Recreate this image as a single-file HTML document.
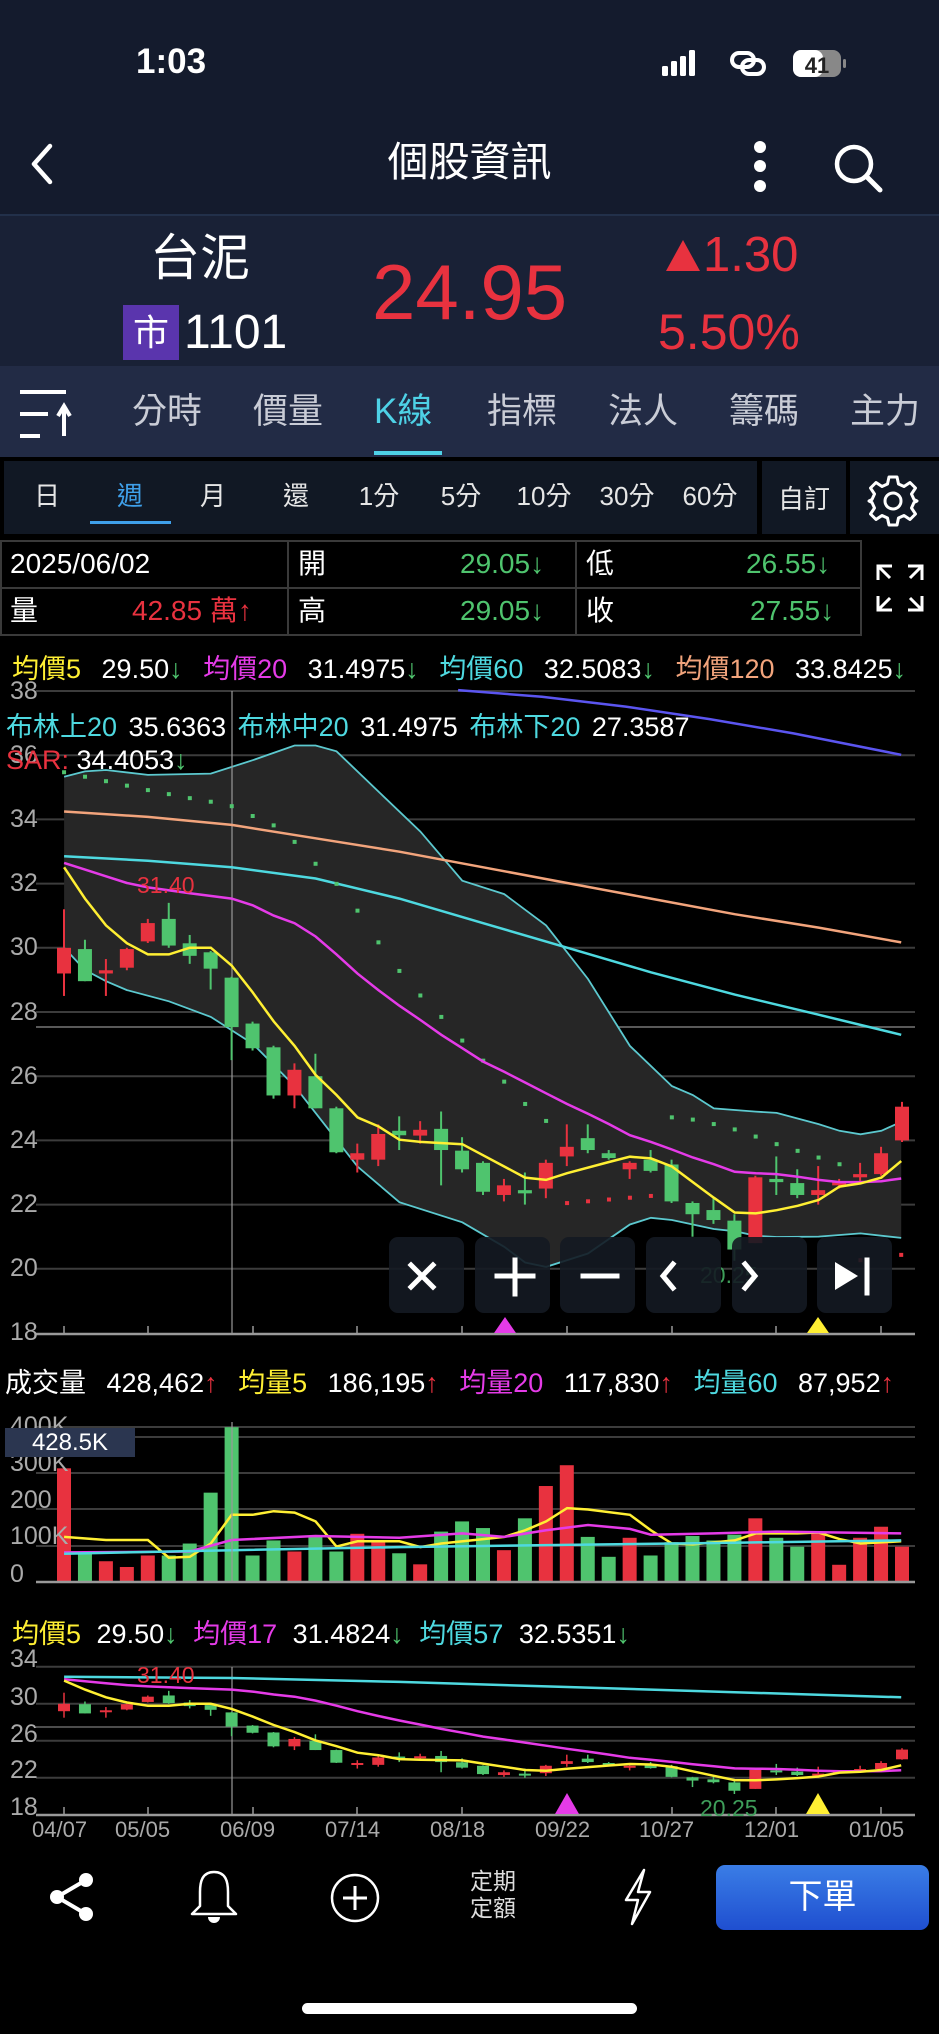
<!DOCTYPE html>
<html><head><meta charset="utf-8">
<style>
*{margin:0;padding:0;box-sizing:border-box}
body{width:939px;height:2034px;background:#000;position:relative;overflow:hidden;font-family:"Liberation Sans","Noto Sans CJK TC",sans-serif;color:#fff}
.a{position:absolute;white-space:nowrap}
.yl{position:absolute;left:10px;font-size:25px;color:#aaa;line-height:26px}
.tab{position:absolute;top:388px;font-size:35px;color:#c9ccd6;line-height:48px}
.pd{position:absolute;top:479px;font-size:26px;color:#e6e6e6;line-height:34px;transform:translateX(-50%)}
.btn{position:absolute;top:1237px;width:75px;height:76px;background:rgba(20,26,34,.9);border-radius:9px}
.cell{position:absolute;font-size:28px;line-height:32px}
.lg{font-size:27px;line-height:30px}
</style></head><body>
<!-- header -->
<div class="a" style="left:0;top:0;width:939px;height:214px;background:#141b2d"></div>
<div class="a" style="left:136px;top:42px;font-size:35px;font-weight:bold">1:03</div>
<svg class="a" style="left:660px;top:48px" width="200" height="34" viewBox="0 0 200 34">
<rect x="2" y="18" width="6" height="10" rx="1.5" fill="#fff"/><rect x="11" y="13" width="6" height="15" rx="1.5" fill="#fff"/><rect x="20" y="8" width="6" height="20" rx="1.5" fill="#fff"/><rect x="29" y="2" width="6" height="26" rx="1.5" fill="#fff"/>
<g fill="none" stroke="#fff" stroke-width="4"><rect x="72" y="5" width="22" height="14" rx="7"/><rect x="82" y="12" width="22" height="14" rx="7"/></g>
<rect x="133" y="2" width="48" height="27" rx="8" fill="#888"/><rect x="133" y="2" width="30" height="27" rx="8" fill="#fff"/><rect x="183" y="11" width="3" height="9" rx="1.5" fill="#888"/>
<text x="157" y="25" font-size="22" font-weight="bold" text-anchor="middle" fill="#222" font-family="Liberation Sans">41</text>
</svg>
<svg class="a" style="left:26px;top:142px" width="30" height="44"><path d="M24 4 L8 22 L24 40" fill="none" stroke="#fff" stroke-width="4.5" stroke-linecap="round" stroke-linejoin="round"/></svg>
<div class="a" style="left:0;width:939px;top:136px;text-align:center;font-size:41px;line-height:52px">個股資訊</div>
<svg class="a" style="left:748px;top:140px" width="24" height="56"><circle cx="12" cy="7" r="6" fill="#fff"/><circle cx="12" cy="26" r="6" fill="#fff"/><circle cx="12" cy="46" r="6" fill="#fff"/></svg>
<svg class="a" style="left:830px;top:140px" width="56" height="56"><circle cx="24" cy="24" r="17" fill="none" stroke="#fff" stroke-width="4.5"/><path d="M37 37 L50 50" stroke="#fff" stroke-width="5" stroke-linecap="round"/></svg>
<!-- stock info -->
<div class="a" style="left:0;top:214px;width:939px;height:152px;background:#192136;border-top:2px solid #22304a"></div>
<div class="a" style="left:150px;top:228px;font-size:50px;line-height:60px">台泥</div>
<div class="a" style="left:123px;top:305px;width:56px;height:55px;background:#5a35ad;font-size:36px;line-height:55px;text-align:center">市</div>
<div class="a" style="left:184px;top:303px;font-size:48px;line-height:60px">1101</div>
<div class="a" style="left:372px;top:250px;font-size:78px;line-height:84px;color:#e8323f">24.95</div>
<svg class="a" style="left:665px;top:238px" width="36" height="34"><path d="M18 2 L35 33 L1 33Z" fill="#e8323f"/></svg>
<div class="a" style="left:703px;top:226px;font-size:49px;line-height:58px;color:#e8323f">1.30</div>
<div class="a" style="left:658px;top:302px;font-size:50px;line-height:60px;color:#e8323f">5.50%</div>
<!-- tabs -->
<div class="a" style="left:0;top:366px;width:939px;height:91px;background:#222b45"></div>
<svg class="a" style="left:18px;top:388px" width="56" height="52"><path d="M2 4 H48 M2 26 H30 M2 48 H22" stroke="#fff" stroke-width="4"/><path d="M46 48 V20 M40 28 L46 18 L52 28" stroke="#fff" stroke-width="4" fill="none"/></svg>
<div class="tab" style="left:132px">分時</div>
<div class="tab" style="left:253px">價量</div>
<div class="tab" style="left:374px;color:#4ed1e6">K線</div>
<div class="tab" style="left:487px">指標</div>
<div class="tab" style="left:608px">法人</div>
<div class="tab" style="left:729px">籌碼</div>
<div class="tab" style="left:850px">主力</div>
<div class="a" style="left:374px;top:451px;width:68px;height:4px;background:#4ed1e6"></div>
<!-- period bar -->
<div class="a" style="left:0;top:457px;width:939px;height:80px;background:#000"></div>
<div class="a" style="left:4px;top:461px;width:753px;height:73px;background:#111824"></div>
<div class="a" style="left:762px;top:461px;width:84px;height:73px;background:#111824"></div>
<div class="a" style="left:850px;top:461px;width:89px;height:73px;background:#111824"></div>
<div class="pd" style="left:47px">日</div>
<div class="pd" style="left:130px;color:#3fa0ea">週</div>
<div class="pd" style="left:213px">月</div>
<div class="pd" style="left:296px">還</div>
<div class="pd" style="left:379px">1分</div>
<div class="pd" style="left:461px">5分</div>
<div class="pd" style="left:544px">10分</div>
<div class="pd" style="left:627px">30分</div>
<div class="pd" style="left:710px">60分</div>
<div class="pd" style="left:804px;top:482px">自訂</div>
<div class="a" style="left:90px;top:521px;width:81px;height:3px;background:#3fa0ea"></div>
<svg class="a" style="left:866px;top:474px" width="54" height="54" viewBox="0 0 54 54"><path d="M23 3 H31 L32.5 10 L38 12.5 L44 8.5 L49.5 14 L45.5 20 L48 25.5 L51 27 L48 28.5 L45.5 34 L49.5 40 L44 45.5 L38 41.5 L32.5 44 L31 51 H23 L21.5 44 L16 41.5 L10 45.5 L4.5 40 L8.5 34 L6 28.5 L3 27 L6 25.5 L8.5 20 L4.5 14 L10 8.5 L16 12.5 L21.5 10 Z" fill="none" stroke="#fff" stroke-width="3" stroke-linejoin="round"/><circle cx="27" cy="27" r="8" fill="none" stroke="#fff" stroke-width="3"/></svg>
<!-- info table -->
<div class="a" style="left:0;top:540px;width:862px;height:96px;border:2px solid #3a3a3a;background:#000"></div>
<div class="a" style="left:0;top:587px;width:862px;height:2px;background:#3a3a3a"></div>
<div class="a" style="left:287px;top:540px;width:2px;height:96px;background:#3a3a3a"></div>
<div class="a" style="left:575px;top:540px;width:2px;height:96px;background:#3a3a3a"></div>
<div class="cell a" style="left:10px;top:548px">2025/06/02</div>
<div class="cell a" style="left:10px;top:595px">量</div>
<div class="cell a" style="left:132px;top:595px;color:#e8323f">42.85 萬↑</div>
<div class="cell a" style="left:298px;top:548px">開</div>
<div class="cell a" style="left:460px;top:548px;color:#4fc46e">29.05↓</div>
<div class="cell a" style="left:298px;top:595px">高</div>
<div class="cell a" style="left:460px;top:595px;color:#4fc46e">29.05↓</div>
<div class="cell a" style="left:586px;top:548px">低</div>
<div class="cell a" style="left:746px;top:548px;color:#4fc46e">26.55↓</div>
<div class="cell a" style="left:586px;top:595px">收</div>
<div class="cell a" style="left:750px;top:595px;color:#4fc46e">27.55↓</div>
<svg class="a" style="left:874px;top:562px" width="52" height="52"><g stroke="#fff" stroke-width="3" fill="none"><path d="M4 18 V4 H18 M4 4 L16 16"/><path d="M48 18 V4 H34 M48 4 L36 16"/><path d="M4 34 V48 H18 M4 48 L16 36"/><path d="M48 34 V48 H34 M48 48 L36 36"/></g></svg>
<!-- chart svg -->
<svg id="c" class="a" style="left:0;top:0" width="939" height="2034"></svg>
<!-- MA legend -->
<div class="a lg" style="left:12px;top:654px;word-spacing:13px"><span style="color:#ffef33">均價5</span> 29.50<span style="color:#4fc46e">↓</span> <span style="color:#e53be8">均價20</span> 31.4975<span style="color:#4fc46e">↓</span> <span style="color:#4ed9e0">均價60</span> 32.5083<span style="color:#4fc46e">↓</span> <span style="color:#f2a47c">均價120</span> 33.8425<span style="color:#4fc46e">↓</span></div>
<div class="yl" style="top:678px">38</div><div class="yl" style="top:742px">36</div><div class="yl" style="top:806px">34</div><div class="yl" style="top:870px">32</div><div class="yl" style="top:934px">30</div><div class="yl" style="top:999px">28</div><div class="yl" style="top:1063px">26</div><div class="yl" style="top:1127px">24</div><div class="yl" style="top:1191px">22</div><div class="yl" style="top:1255px">20</div><div class="yl" style="top:1319px">18</div>
<div class="a lg" style="left:6px;top:712px;color:#4ed9e0;word-spacing:4px">布林上20 <span style="color:#fff">35.6363</span> 布林中20 <span style="color:#fff">31.4975</span> 布林下20 <span style="color:#fff">27.3587</span></div>
<div class="a lg" style="left:6px;top:745px;color:#e8323f">SAR: <span style="color:#fff">34.4053</span><span style="color:#4fc46e">↓</span></div>
<div class="a" style="left:137px;top:872px;font-size:23px;color:#e8323f">31.40</div>
<div class="a" style="left:700px;top:1262px;font-size:23px;color:#3e9e5a">20.25</div>
<!-- buttons -->
<div class="btn" style="left:389px"></div><div class="btn" style="left:475px"></div><div class="btn" style="left:560px"></div><div class="btn" style="left:646px"></div><div class="btn" style="left:732px"></div><div class="btn" style="left:817px"></div>
<svg class="a" style="left:380px;top:1237px" width="520" height="76">
<g stroke="#fff" stroke-width="5" fill="none" stroke-linecap="square">
<path d="M31 28 L53 50 M53 28 L31 50"/><path d="M135 23 V57 M117 39 H153"/><path d="M203 39 H237"/>
<path d="M293 27 L283 39 L293 51"/><path d="M365 27 L375 39 L365 51"/>
<path d="M487 23 V56"/></g><path d="M455 25 L478 39 L455 53Z" fill="#fff"/>
</svg>
<!-- volume -->
<div class="a lg" style="left:5px;top:1368px;word-spacing:13px">成交量 428,462<span style="color:#e8323f">↑</span> <span style="color:#ffef33">均量5</span> 186,195<span style="color:#e8323f">↑</span> <span style="color:#e53be8">均量20</span> 117,830<span style="color:#e8323f">↑</span> <span style="color:#4ed9e0">均量60</span> 87,952<span style="color:#e8323f">↑</span></div>
<div class="yl" style="top:1413px">400K</div><div class="yl" style="top:1450px">300K</div><div class="yl" style="top:1487px">200</div><div class="yl" style="top:1523px">100K</div><div class="yl" style="top:1561px">0</div>
<div class="a" style="left:5px;top:1428px;width:130px;height:29px;background:#2b3650;font-size:24px;line-height:29px;text-align:center">428.5K</div>
<!-- lower -->
<div class="a lg" style="left:12px;top:1619px;word-spacing:8px"><span style="color:#ffef33">均價5</span> 29.50<span style="color:#4fc46e">↓</span> <span style="color:#e53be8">均價17</span> 31.4824<span style="color:#4fc46e">↓</span> <span style="color:#4ed9e0">均價57</span> 32.5351<span style="color:#4fc46e">↓</span></div>
<div class="yl" style="top:1646px">34</div><div class="yl" style="top:1684px">30</div><div class="yl" style="top:1721px">26</div><div class="yl" style="top:1757px">22</div><div class="yl" style="top:1794px">18</div>
<div class="a" style="left:137px;top:1662px;font-size:23px;color:#e8323f">31.40</div>
<div class="a" style="left:700px;top:1795px;font-size:23px;color:#3e9e5a">20.25</div>
<div class="a" style="left:0;top:1817px;width:939px;font-size:22px;color:#aaa;height:26px">
<span class="a" style="left:32px">04/07</span><span class="a" style="left:115px">05/05</span><span class="a" style="left:220px">06/09</span><span class="a" style="left:325px">07/14</span><span class="a" style="left:430px">08/18</span><span class="a" style="left:535px">09/22</span><span class="a" style="left:639px">10/27</span><span class="a" style="left:744px">12/01</span><span class="a" style="left:849px">01/05</span></div>
<!-- bottom bar -->
<svg class="a" style="left:48px;top:1872px" width="48" height="50"><g fill="#fff"><circle cx="38" cy="8" r="7"/><circle cx="9" cy="25" r="7"/><circle cx="38" cy="42" r="7"/></g><path d="M38 8 L9 25 L38 42" stroke="#fff" stroke-width="4" fill="none"/></svg>
<svg class="a" style="left:187px;top:1868px" width="54" height="58"><path d="M27 4 C15 4 13 14 13 24 V38 L5 46 H49 L41 38 V24 C41 14 39 4 27 4Z" fill="none" stroke="#fff" stroke-width="2.5" stroke-linejoin="round"/><path d="M21 49 A6 6 0 0 0 33 49Z" fill="#fff"/></svg>
<svg class="a" style="left:329px;top:1872px" width="52" height="52"><circle cx="26" cy="26" r="23" fill="none" stroke="#fff" stroke-width="2.5"/><path d="M26 14 V38 M14 26 H38" stroke="#fff" stroke-width="3"/></svg>
<div class="a" style="left:470px;top:1868px;font-size:23px;line-height:27px;color:#ddd">定期<br>定額</div>
<svg class="a" style="left:620px;top:1868px" width="36" height="58"><path d="M24 2 L6 32 H18 L12 56 L30 24 H18 Z" fill="none" stroke="#fff" stroke-width="2.5" stroke-linejoin="round"/></svg>
<div class="a" style="left:716px;top:1865px;width:213px;height:65px;border-radius:9px;background:linear-gradient(#3a7de6,#1f4fd0);font-size:34px;line-height:65px;text-align:center">下單</div>
<div class="a" style="left:302px;top:2003px;width:335px;height:11px;border-radius:6px;background:#fff"></div>
<script>
var S=document.getElementById('c'),h='';
function X(i){return 64+20.95*i}
function UY(p){return 691+(38-p)*32.1}
function LY(p){return 1814.8-(p-18)*9.25}
function zp(zy){return 38-(zy-115)/71.9}
function poly(pts,fn,col,w){var s=pts.map(function(q){return (q[0]/1.67).toFixed(1)+','+fn(zp(q[1])).toFixed(1)}).join(' ');h+='<polyline points="'+s+'" fill="none" stroke="'+col+'" stroke-width="'+w+'"/>';}
[38,36,34,32,30,28,26,24,22,20].forEach(function(p){h+='<line x1="36" x2="915" y1="'+UY(p)+'" y2="'+UY(p)+'" stroke="#3c3c3c" stroke-width="2"/>'});
h+='<line x1="36" x2="915" y1="1027" y2="1027" stroke="#777" stroke-width="1.5"/>';
var up=[[107,307],[142,295],[177,292],[247,303],[352,300],[422,270],[492,237],[527,237],[562,250],[632,340],[702,430],[772,540],[842,570],[912,640],[982,760],[1052,910],[1122,1000],[1157,1020],[1192,1050],[1262,1057],[1297,1060],[1367,1085],[1402,1100],[1437,1108],[1472,1100],[1505,1080]];
var lo=[[107,690],[142,740],[177,765],[212,785],[282,810],[352,845],[422,905],[492,1000],[562,1120],[597,1180],[632,1220],[667,1260],[772,1305],[842,1360],[877,1395],[912,1405],[982,1375],[1052,1310],[1087,1295],[1122,1300],[1192,1320],[1227,1325],[1262,1335],[1297,1338],[1367,1337],[1437,1330],[1505,1340]];
var fill=up.concat(lo.slice().reverse()).map(function(q){return (q[0]/1.67).toFixed(1)+','+UY(zp(q[1])).toFixed(1)}).join(' ');
h+='<polygon points="'+fill+'" fill="#262626"/>';
poly(up,UY,'#5cc9cf',1.8);poly(lo,UY,'#5cc9cf',1.8);
h+='<line x1="232" x2="232" y1="691" y2="1333" stroke="#999" stroke-width="1.2"/>';
var ma5=[[107,510],[142,580],[177,640],[212,680],[247,705],[282,705],[317,690],[352,690],[387,730],[422,790],[457,855],[492,910],[527,975],[562,1020],[597,1070],[632,1090],[667,1120],[702,1125],[772,1130],[807,1155],[842,1180],[877,1205],[912,1210],[947,1195],[1017,1170],[1052,1158],[1087,1162],[1122,1180],[1157,1215],[1192,1250],[1227,1283],[1262,1285],[1297,1278],[1332,1268],[1367,1255],[1402,1225],[1437,1218],[1472,1205],[1505,1168]];
var ma20=[[107,500],[142,515],[177,530],[212,545],[247,555],[317,568],[387,580],[422,595],[457,618],[492,635],[527,665],[562,705],[597,748],[632,785],[667,820],[702,852],[737,885],[772,915],[807,945],[842,968],[877,992],[912,1016],[947,1040],[982,1062],[1017,1085],[1052,1110],[1087,1125],[1122,1142],[1157,1160],[1192,1175],[1227,1192],[1262,1195],[1297,1197],[1332,1203],[1367,1210],[1402,1215],[1437,1215],[1472,1213],[1505,1207]];
var ma60=[[107,485],[247,495],[387,510],[527,535],[667,580],[807,635],[947,690],[1087,745],[1227,795],[1367,840],[1505,885]];
var ma120=[[107,385],[247,397],[387,415],[527,445],[667,475],[807,510],[947,545],[1087,580],[1227,615],[1367,645],[1505,678]];
var blue=[[765,113],[905,128],[1045,150],[1185,178],[1325,210],[1505,258]];
poly(ma120,UY,'#f2a47c',2.5);poly(ma60,UY,'#4ed9e0',2.5);poly(blue,UY,'#5b55f0',2.5);
var sg=[[107,297],[142,307],[177,317],[212,327],[247,337],[282,346],[317,355],[352,363],[387,373],[422,395],[457,416],[492,453],[527,502],[562,547],[597,607],[632,678],[667,742],[702,797],[737,845],[772,898],[807,943],[842,990],[877,1040],[912,1078],[1122,1070],[1157,1075],[1192,1085],[1227,1097],[1262,1113],[1297,1130],[1332,1145],[1367,1160],[1402,1175]];
sg.forEach(function(q){h+='<rect x="'+(q[0]/1.67-2)+'" y="'+(UY(zp(q[1]))-2)+'" width="4" height="4" fill="#4fc46e"/>'});
[[947,1262],[982,1258],[1017,1254],[1052,1250],[1087,1246],[1437,1390],[1505,1378]].forEach(function(q){h+='<rect x="'+(q[0]/1.67-2)+'" y="'+(UY(zp(q[1]))-2)+'" width="4" height="4" fill="#e8323f"/>'});
var C=[[29.2,30,31.2,28.5],[29.96,28.96,30.25,28.96],[29.2,29.3,29.65,28.5],[29.38,29.96,30,29.3],[30.2,30.77,30.9,30.15],[30.9,30.07,31.4,30],[30.14,29.75,30.4,29.5],[29.86,29.35,29.9,28.7],[29.07,27.53,29.1,26.5],[27.64,26.87,27.7,26.8],[26.9,25.4,26.95,25.3],[25.4,26.2,26.4,25],[26,25,26.7,25],[25,23.63,25.05,23.6],[23.4,23.6,23.9,23],[23.4,24.2,24.5,23.2],[24.3,24.16,24.75,23.7],[24.15,24.33,24.6,23.9],[24.36,23.7,24.9,22.6],[23.68,23.1,24.1,23],[23.3,22.4,23.35,22.3],[22.3,22.6,22.8,22.1],[22.45,22.35,23,22],[22.5,23.3,23.4,22.2],[23.5,23.8,24.5,23.2],[24.07,23.7,24.5,23.6],[23.6,23.45,23.7,23.4],[23.1,23.3,23.35,22.8],[23.4,23.05,23.7,23],[23.25,22.1,23.4,22.05],[22.05,21.7,22.1,21],[21.83,21.52,22.2,21.4],[21.5,20.6,21.7,20.25],[20.8,22.85,22.9,20.8],[22.8,22.7,23.5,22.3],[22.67,22.3,23.1,22.2],[22.3,22.45,23.2,22],[22.6,22.7,22.8,22.5],[22.85,22.95,23.3,22.7],[22.95,23.6,23.8,22.9],[24,25.05,25.2,23.95]];
function candles(Y,bw,lw){C.forEach(function(c,i){var x=X(i),col=c[1]>=c[0]?'#e8323f':'#4fc46e';var t=Y(Math.max(c[0],c[1])),b=Y(Math.min(c[0],c[1]));if(b-t<2)b=t+2;
h+='<line x1="'+x+'" x2="'+x+'" y1="'+Y(c[2])+'" y2="'+Y(c[3])+'" stroke="'+col+'" stroke-width="'+lw+'"/><rect x="'+(x-bw/2)+'" y="'+t+'" width="'+bw+'" height="'+(b-t)+'" fill="'+col+'"/>';});}
candles(UY,14,2);
poly(ma20,UY,'#e53be8',2.5);poly(ma5,UY,'#ffef33',2.5);
h+='<line x1="36" x2="915" y1="1334" y2="1334" stroke="#999" stroke-width="2.5"/>';
[64,148,253,357,462,567,672,776,881].forEach(function(x){h+='<line x1="'+x+'" x2="'+x+'" y1="1326" y2="1334" stroke="#999" stroke-width="1.5"/>'});
h+='<path d="M505 1317 L516 1333 L494 1333Z" fill="#e53be8"/><path d="M818 1317 L829 1333 L807 1333Z" fill="#ffef33"/>';
[1427,1437,1473,1509,1546].forEach(function(y){h+='<line x1="36" x2="915" y1="'+y+'" y2="'+y+'" stroke="#3c3c3c" stroke-width="2"/>'});
var V=[290,478,500,513,487,487,460,345,197,487,453,478,445,478,438,453,482,507,433,410,425,475,403,330,283,445,490,447,487,457,443,453,440,403,447,467,437,508,447,422,467];
V.forEach(function(v,i){var c=C[i],col=c[1]>=c[0]?'#e8323f':'#4fc46e';var t=1340+v/2.26;h+='<rect x="'+(X(i)-7)+'" y="'+t+'" width="14" height="'+(1582-t)+'" fill="'+col+'"/>'});
function vpoly(pts,col){h+='<polyline points="'+pts.map(function(q){return (q[0]/1.67).toFixed(1)+','+(1340+q[1]/2.26).toFixed(1)}).join(' ')+'" fill="none" stroke="'+col+'" stroke-width="2.5"/>'}
vpoly([[107,445],[177,452],[247,452],[282,492],[317,490],[352,460],[387,395],[422,395],[457,387],[492,390],[527,410],[562,467],[597,455],[667,455],[702,468],[737,460],[807,450],[842,445],[877,430],[912,410],[947,380],[982,383],[1052,395],[1087,430],[1122,460],[1157,462],[1227,453],[1262,437],[1332,437],[1367,435],[1402,450],[1437,460],[1505,455]],'#ffef33');
vpoly([[107,480],[317,478],[387,452],[527,443],[667,447],[772,437],[842,445],[912,430],[982,418],[1052,427],[1087,440],[1192,437],[1297,433],[1505,437]],'#e53be8');
vpoly([[107,483],[387,475],[667,468],[947,463],[1227,458],[1505,453]],'#4ed9e0');
h+='<line x1="232" x2="232" y1="1422" y2="1582" stroke="#999" stroke-width="1.2"/><line x1="36" x2="915" y1="1582" y2="1582" stroke="#999" stroke-width="2.5"/>';
[34,30,26,22].forEach(function(p){h+='<line x1="36" x2="915" y1="'+LY(p)+'" y2="'+LY(p)+'" stroke="#3c3c3c" stroke-width="2"/>'});
h+='<line x1="36" x2="915" y1="1727" y2="1727" stroke="#666" stroke-width="1.5"/><line x1="232" x2="232" y1="1667" y2="1815" stroke="#999" stroke-width="1.2"/>';
poly([[107,480],[387,490],[667,520],[947,560],[1227,600],[1505,640]],LY,'#4ed9e0',2.5);
candles(LY,12,1.5);
poly(ma20,LY,'#e53be8',2.5);poly(ma5,LY,'#ffef33',2.5);
h+='<line x1="36" x2="915" y1="1815" y2="1815" stroke="#999" stroke-width="2.5"/>';
[64,148,253,357,462,567,672,776,881].forEach(function(x){h+='<line x1="'+x+'" x2="'+x+'" y1="1807" y2="1815" stroke="#999" stroke-width="1.5"/>'});
h+='<path d="M567 1793 L579 1814 L555 1814Z" fill="#e53be8"/><path d="M818 1793 L830 1814 L806 1814Z" fill="#ffef33"/>';
S.innerHTML=h;
</script>
</body></html>
